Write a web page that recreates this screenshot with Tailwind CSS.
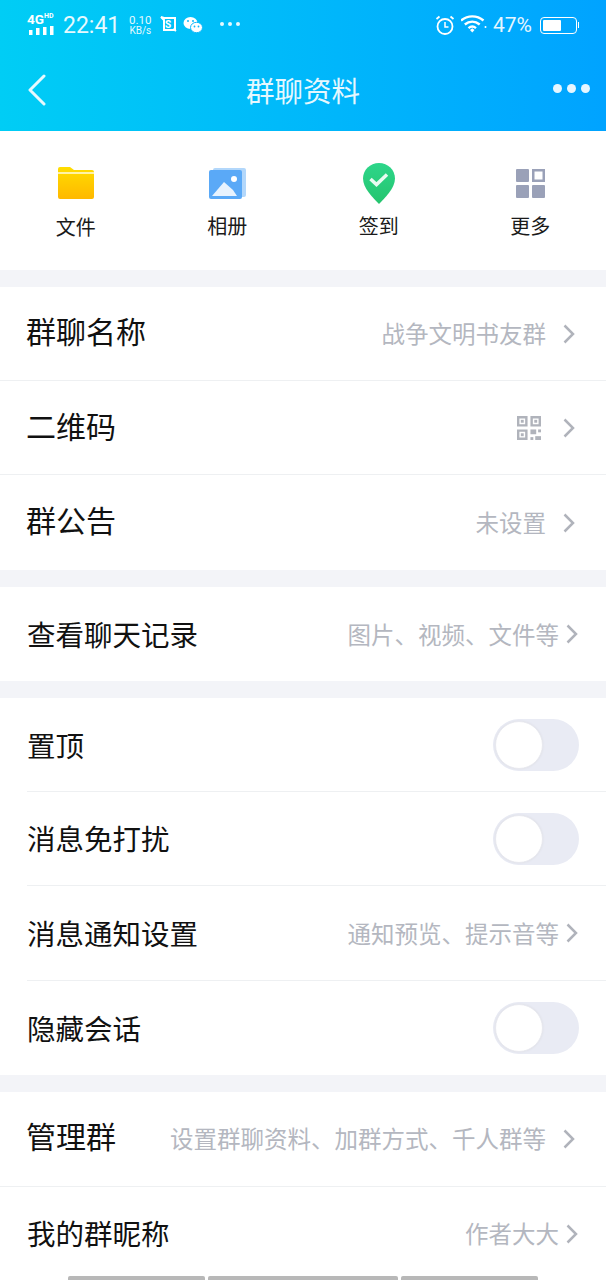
<!DOCTYPE html>
<html lang="zh">
<head>
  <meta charset="UTF-8" />
  <title>群聊资料</title>
  <script src="https://cdn.jsdelivr.net/npm/@tailwindcss/browser@4"></script>
</head>
<body class="bg-[#f3f4f8] font-['Noto_Sans_CJK_SC','Noto_Sans',sans-serif]">
  <div class="relative w-[606px] h-[1280px] overflow-hidden">

    <!-- status bar + title -->
    <div class="h-[131px] bg-gradient-to-r from-[#00cdf5] to-[#00a3ff] text-white">
      <div class="h-[50px] flex items-center pl-[27px] pr-[27px] font-['Roboto',sans-serif]">
        <div class="w-[30px] mt-[-3px]">
          <div class="flex items-start h-[13px]">
            <span class="text-[13.500px] leading-[13px] font-bold">4G</span>
            <span class="text-[7px] leading-[7px] font-bold">HD</span>
          </div>
          <svg class="w-[30px] h-[9px]" viewBox="0 0 30 9" fill="#fff">
            <rect x="2" y="4" width="3.500" height="5" /><rect x="9" y="2" width="3.500" height="7" /><rect x="16" y="1" width="3.500" height="8" /><rect x="23" y="0" width="3.500" height="9" />
          </svg>
        </div>
        <span class="ml-[6px] text-[23px] leading-none opacity-90">22:41</span>
        <div class="ml-[7px] w-[26px] text-[11.500px] leading-[12px] text-center opacity-90"><div>0.10</div><div class="text-[10px] leading-[10px]">KB/s</div></div>
        <svg class="ml-[7px] w-[18px] h-[18px] mt-[-2px]" viewBox="0 0 18 18" fill="none" stroke="#fff">
          <path d="M1 2l3 1h11v12H4V5L1 2z" stroke-width="2" /><path d="M13 14l3 2" stroke-width="2" />
          <text x="5" y="13" font-size="10" font-weight="700" fill="#fff" stroke="none" font-family="Roboto">S</text>
        </svg>
        <svg class="ml-[5px] w-[20px] h-[18px] mt-[-1px]" viewBox="0 0 20 18" fill="#fff">
          <ellipse cx="7.500" cy="7" rx="7" ry="6" />
          <ellipse cx="13.500" cy="11.500" rx="6" ry="5.200" stroke="#0fb8fa" stroke-width="1" />
          <circle cx="5" cy="5" r="1" fill="#0fb8fa" /><circle cx="10" cy="5" r="1" fill="#0fb8fa" />
          <circle cx="11.500" cy="10.500" r=".9" fill="#0fb8fa" /><circle cx="15.500" cy="10.500" r=".9" fill="#0fb8fa" />
        </svg>
        <div class="ml-[17px] flex gap-[4px] mt-[-2px]"><i class="size-[4px] rounded-full bg-white/90"></i><i class="size-[4px] rounded-full bg-white/90"></i><i class="size-[4px] rounded-full bg-white/90"></i></div>

        <svg class="ml-auto w-[20px] h-[20px]" viewBox="0 0 20 20" fill="none" stroke="#fff" stroke-width="1.800">
          <circle cx="10" cy="11.500" r="7.500" /><path d="M10 7v5h3.500" stroke-width="1.500" /><path d="M1.500 4l3-2.500M18.500 4l-3-2.500" />
        </svg>
        <svg class="ml-[6px] w-[26px] h-[20px] mt-[-2px]" viewBox="0 0 26 20" fill="none" stroke="#fff" stroke-width="2.400">
          <path d="M0 6.500c6.500-5.500 16-5.500 22.500 0M3.800 10.500c4.500-3.800 10.400-3.800 14.900 0M7.500 14.200c2.300-2 5.200-2 7.500 0" />
          <path d="M9 16l2.250-1.800 2.250 1.800-2.250 2.500z" fill="#fff" stroke="none" />
          <circle cx="24.500" cy="13" r="1" fill="#fff" stroke="none" />
        </svg>
        <span class="ml-[6px] text-[21px] leading-none opacity-90">47%</span>
        <div class="ml-[8px] flex items-center">
          <div class="w-[37px] h-[17px] rounded-[4px] border border-white p-[2px]"><div class="w-[18px] h-full bg-white rounded-[1px]"></div></div>
          <div class="ml-[1px] w-[1px] h-[6px] bg-white"></div>
        </div>
      </div>
      <div class="relative h-[81px] flex items-center justify-center">
        <svg class="absolute left-[28px] top-[24px] w-[18px] h-[32px]" viewBox="0 0 18 32" fill="none" stroke="#fff" stroke-width="3" stroke-linecap="round" stroke-linejoin="round" opacity=".9">
          <path d="M16 2L2 16l14 14" />
        </svg>
        <h1 class="text-[28.500px] leading-none mt-[-1px] opacity-90">群聊资料</h1>
        <div class="absolute right-[16px] top-[34px] flex gap-[5px]"><i class="size-[9px] rounded-full bg-white/90"></i><i class="size-[9px] rounded-full bg-white/90"></i><i class="size-[9px] rounded-full bg-white/90"></i></div>
      </div>
    </div>

    <!-- shortcuts -->
    <div class="h-[139px] bg-white grid grid-cols-4 text-[20px] text-[#1a1a1a]">
      <div class="flex flex-col items-center">
        <svg class="mt-[36px] w-[36px] h-[32px]" viewBox="0 0 36 32">
          <defs><linearGradient id="folder" x1="0" y1="0" x2="0" y2="1"><stop offset="0" stop-color="#ffdd00" /><stop offset="1" stop-color="#ffb800" /></linearGradient></defs>
          <path d="M0 2a2 2 0 012-2h10l4 3h18a2 2 0 012 2v25a2 2 0 01-2 2H2a2 2 0 01-2-2z" fill="url(#folder)" />
          <rect x="0" y="5" width="36" height="2" fill="#fff3a8" />
        </svg>
        <span class="mt-[13px] leading-[30px]">文件</span>
      </div>
      <div class="flex flex-col items-center">
        <svg class="mt-[37px] w-[37px] h-[31px]" viewBox="0 0 37 31">
          <path d="M4 2a2 2 0 012-2h29a2 2 0 012 2v25a2 2 0 01-2 2H4z" fill="#b2d7fb" />
          <rect x="0" y="2" width="33" height="29" rx="2" fill="#5aa9f7" />
          <path d="M3 28L15 14l9 8 4 6z" fill="#e8f3fe" />
          <circle cx="25" cy="11" r="3" fill="#fff" />
        </svg>
        <span class="mt-[12px] leading-[30px]">相册</span>
      </div>
      <div class="flex flex-col items-center">
        <svg class="mt-[32px] w-[32px] h-[41px] mb-[-5px]" viewBox="0 0 32 41">
          <defs><linearGradient id="pin" x1="0" y1="0" x2="0" y2="1"><stop offset="0" stop-color="#2dd68a" /><stop offset="1" stop-color="#25c46e" /></linearGradient></defs>
          <path d="M16 0c9 0 16 7 16 15.500C32 25 22 35 16 41 10 35 0 25 0 15.500 0 7 7 0 16 0z" fill="url(#pin)" />
          <path d="M7.500 16l6 5.500 10.500-10" fill="none" stroke="#e9fbf2" stroke-width="3.500" />
        </svg>
        <span class="mt-[12px] leading-[30px]">签到</span>
      </div>
      <div class="flex flex-col items-center">
        <svg class="mt-[38px] w-[29px] h-[29px] mb-[1px]" viewBox="0 0 29 29" fill="#9aa1b8">
          <rect x="0" y="0" width="13" height="13" rx="1" /><rect x="0" y="16" width="13" height="13" rx="1" /><rect x="16" y="16" width="13" height="13" rx="1" />
          <path fill-rule="evenodd" d="M16 0h13v13H16zM18.500 2.500v8h8v-8z" />
        </svg>
        <span class="mt-[12px] leading-[30px]">更多</span>
      </div>
    </div>

    <!-- group info -->
    <div class="mt-[17px] bg-white text-[#111]">
      <div class="h-[94px] pl-[26px] pr-[31px] flex items-center border-b border-[#eef0f2]">
        <span class="text-[30px] leading-none mt-[-7px]">群聊名称</span>
        <span class="ml-auto text-[23.500px] leading-none text-[#b4b7c0]">战争文明书友群</span>
        <svg class="ml-[17px] w-[12px] h-[20px]" viewBox="0 0 12 20" fill="none" stroke="#b0b3bb" stroke-width="2.500"><path d="M1.500 1.500L10 10l-8.500 8.500" /></svg>
      </div>
      <div class="h-[94px] pl-[26px] pr-[31px] flex items-center border-b border-[#eef0f2]">
        <span class="text-[30px] leading-none mt-[-6px]">二维码</span>
        <svg class="ml-auto w-[24px] h-[24px]" viewBox="0 0 25 25" fill="#b0b3bb">
          <path fill-rule="evenodd" d="M0 0h11v11H0zM2.500 2.500v6h6v-6zM14 0h11v11H14zM16.500 2.500v6h6v-6zM0 14h11v11H0zM2.500 16.500v6h6v-6z" />
          <rect x="4" y="4" width="3" height="3" /><rect x="18" y="4" width="3" height="3" /><rect x="4" y="18" width="3" height="3" />
          <rect x="14" y="14" width="6" height="5" /><rect x="22" y="14" width="3" height="3" /><rect x="14" y="22" width="3" height="3" /><rect x="19" y="21" width="6" height="4" />
        </svg>
        <svg class="ml-[22px] w-[12px] h-[20px]" viewBox="0 0 12 20" fill="none" stroke="#b0b3bb" stroke-width="2.500"><path d="M1.500 1.500L10 10l-8.500 8.500" /></svg>
      </div>
      <div class="h-[95px] pl-[26px] pr-[31px] flex items-center">
        <span class="text-[30px] leading-none mt-[-7px]">群公告</span>
        <span class="ml-auto text-[23.500px] leading-none text-[#b4b7c0]">未设置</span>
        <svg class="ml-[17px] w-[12px] h-[20px]" viewBox="0 0 12 20" fill="none" stroke="#b0b3bb" stroke-width="2.500"><path d="M1.500 1.500L10 10l-8.500 8.500" /></svg>
      </div>
    </div>

    <!-- history -->
    <div class="mt-[17px] bg-white text-[#111]">
      <div class="h-[94px] pl-[27px] pr-[28px] flex items-center">
        <span class="text-[28.500px] leading-none">查看聊天记录</span>
        <span class="ml-auto text-[23.500px] leading-none text-[#b4b7c0] mt-[2px]">图片、视频、文件等</span>
        <svg class="ml-[7px] w-[12px] h-[20px] mt-[-1px]" viewBox="0 0 12 20" fill="none" stroke="#b0b3bb" stroke-width="2.500"><path d="M1.500 1.500L10 10l-8.500 8.500" /></svg>
      </div>
    </div>

    <!-- settings -->
    <div class="mt-[17px] bg-white text-[#111]">
      <div class="h-[94px] ml-[27px] pr-[27px] flex items-center justify-between border-b border-[#eef0f2]">
        <span class="text-[28.500px] leading-none mt-[2px]">置顶</span>
        <div class="w-[86px] h-[52px] rounded-full bg-[#e9ebf4] p-[2px]"><div class="size-[48px] rounded-full bg-white border border-[#e8e9ef] shadow-[0_0_2px_#dcdde4]"></div></div>
      </div>
      <div class="h-[94px] ml-[27px] pr-[27px] flex items-center justify-between border-b border-[#eef0f2]">
        <span class="text-[28.500px] leading-none">消息免打扰</span>
        <div class="w-[86px] h-[52px] rounded-full bg-[#e9ebf4] p-[2px]"><div class="size-[48px] rounded-full bg-white border border-[#e8e9ef] shadow-[0_0_2px_#dcdde4]"></div></div>
      </div>
      <div class="h-[95px] ml-[27px] pr-[28px] flex items-center border-b border-[#eef0f2]">
        <span class="text-[28.500px] leading-none">消息通知设置</span>
        <span class="ml-auto text-[23.500px] leading-none text-[#b4b7c0] mt-[2px]">通知预览、提示音等</span>
        <svg class="ml-[7px] w-[12px] h-[20px] mt-[-1px]" viewBox="0 0 12 20" fill="none" stroke="#b0b3bb" stroke-width="2.500"><path d="M1.500 1.500L10 10l-8.500 8.500" /></svg>
      </div>
      <div class="h-[94px] ml-[27px] pr-[27px] flex items-center justify-between">
        <span class="text-[28.500px] leading-none">隐藏会话</span>
        <div class="w-[86px] h-[52px] rounded-full bg-[#e9ebf4] p-[2px]"><div class="size-[48px] rounded-full bg-white border border-[#e8e9ef] shadow-[0_0_2px_#dcdde4]"></div></div>
      </div>
    </div>

    <!-- manage -->
    <div class="mt-[17px] bg-white text-[#111] h-[188px]">
      <div class="h-[95px] pl-[26px] pr-[31px] flex items-center border-b border-[#eef0f2]">
        <span class="text-[30px] leading-none mt-[-8px]">管理群</span>
        <span class="ml-auto text-[23.500px] leading-none text-[#b4b7c0]">设置群聊资料、加群方式、千人群等</span>
        <svg class="ml-[17px] w-[12px] h-[20px]" viewBox="0 0 12 20" fill="none" stroke="#b0b3bb" stroke-width="2.500"><path d="M1.500 1.500L10 10l-8.500 8.500" /></svg>
      </div>
      <div class="h-[93px] pl-[27px] pr-[28px] flex items-center">
        <span class="text-[28.500px] leading-none">我的群昵称</span>
        <span class="ml-auto text-[23.500px] leading-none text-[#b4b7c0]">作者大大</span>
        <svg class="ml-[7px] w-[12px] h-[20px]" viewBox="0 0 12 20" fill="none" stroke="#b0b3bb" stroke-width="2.500"><path d="M1.500 1.500L10 10l-8.500 8.500" /></svg>
      </div>
    </div>

    <!-- scroll bars along the bottom edge -->
    <div class="absolute left-[68px] bottom-0 flex gap-[3px]">
      <div class="w-[137px] h-[4px] rounded-t-[2px] bg-[#b8b8b8]"></div>
      <div class="w-[190px] h-[4px] rounded-t-[2px] bg-[#b8b8b8]"></div>
      <div class="w-[137px] h-[4px] rounded-t-[2px] bg-[#b8b8b8]"></div>
    </div>
  </div>
</body>
</html>
